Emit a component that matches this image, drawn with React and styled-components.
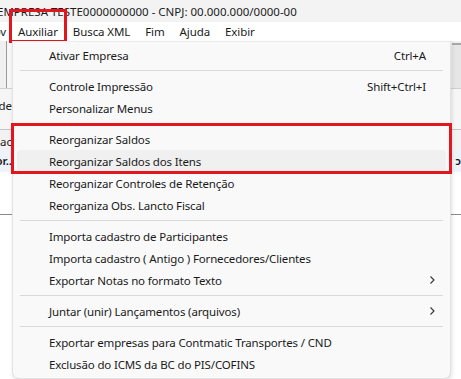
import React from "react";
import styled, { createGlobalStyle } from "styled-components";

const Global = createGlobalStyle`
  html, body { margin: 0; padding: 0; background: #ffffff; }
  body { font-family: "Segoe UI", "Noto Sans", "Open Sans", sans-serif; font-size: 11.5px; color: #1b1b1b; }
  #root { width: 461px; height: 379px; overflow: hidden; position: relative; }
`;

const Window = styled.div`
  width: 461px;
  height: 379px;
  position: relative;
  overflow: hidden;
  display: flex;
  flex-direction: column;
  background: #ffffff;
`;

const TitleBar = styled.div`
  height: 22px;
  flex: none;
  background: #f3f3f3;
  display: flex;
  align-items: center;
  white-space: nowrap;
  overflow: hidden;
`;

const TitleText = styled.span`
  margin-left: -3px;
  color: #1c1c1c;
`;

const MenuBar = styled.div`
  height: 19px;
  flex: none;
  background: #ffffff;
  display: flex;
  align-items: center;
  white-space: nowrap;
  letter-spacing: -0.1px;
`;

const MenuBarItem = styled.span`
  position: relative;
  height: 19px;
  display: flex;
  align-items: center;
  padding: 0 7.5px;
  color: #1b1b1b;
  ${(p) =>
    p.$marked &&
    `
    &::after {
      content: "";
      position: absolute;
      left: -1.5px;
      right: -1.5px;
      top: -13px;
      bottom: -2px;
      border: 3px solid #e3161e;
      box-sizing: border-box;
      pointer-events: none;
    }
  `}
`;

const Clipped = styled.div`
  width: ${(p) => p.$w}px;
  overflow: hidden;
  display: flex;
  justify-content: flex-end;
  white-space: nowrap;
  flex: none;
  & > span {
    padding-right: ${(p) => p.$pr ?? 0}px;
  }
`;

const Toolbar = styled.div`
  height: 47px;
  flex: none;
  background: #f0f0f0;
  display: flex;
  padding-left: 6px;
  box-sizing: border-box;
  justify-content: space-between;
`;

const ToolbarPanel = styled.div`
  width: 6px;
  border-left: 1px solid #9a9a9a;
  background: #f7f7f7;
`;

const ToolbarRight = styled.div`
  width: 9px;
  margin-top: 2px;
  border-top: 2px solid #a8a8a8;
  background: #e6e6e6;
`;

const FormRow = styled.div`
  height: 41px;
  flex: none;
  background: #f6f6f6;
  border-top: 1px solid #d0d0d0;
  box-sizing: border-box;
  display: flex;
  align-items: center;
  padding-bottom: 8px;
`;

const GridHeader = styled.div`
  height: 20px;
  flex: none;
  background: #f2f2f2;
  border-top: 1px solid #c4c4c4;
  box-sizing: border-box;
  display: flex;
  align-items: center;
  padding-top: 4px;
`;

const GridRow = styled.div`
  height: 23px;
  flex: none;
  background: #eef2fa;
  display: flex;
  align-items: center;
  font-weight: 600;
  justify-content: space-between;
`;

const Blank = styled.div`
  height: 42px;
  flex: none;
  background: #ffffff;
  border-bottom: 1px solid #8a8a8a;
`;

const Rest = styled.div`
  flex: 1;
  background: #ffffff;
`;

const Popup = styled.div`
  position: absolute;
  left: 12px;
  top: 41px;
  width: 439px;
  box-sizing: border-box;
  padding: 2px 0 3px;
  background: #f9f9f9;
  border: 1px solid #e2e2e2;
  border-top-color: #ececec;
  border-radius: 0 0 7px 7px;
  box-shadow: 1px 2px 4px rgba(0, 0, 0, 0.12);
  display: flex;
  flex-direction: column;
  letter-spacing: -0.15px;
`;

const Item = styled.div`
  height: 22px;
  margin: 0 4px;
  padding: 0 20px 0 32px;
  display: flex;
  align-items: center;
  justify-content: space-between;
  border-radius: 4px;
  white-space: nowrap;
  color: #1a1a1a;
  background: ${(p) => (p.$hover ? "#f0f0f0" : "transparent")};
`;

const Shortcut = styled.span`
  color: #1a1a1a;
`;

const Chevron = styled.svg`
  width: 8px;
  height: 10px;
  margin-right: -10px;
`;

const Separator = styled.div`
  height: 1px;
  margin: 4px 7px;
  background: #dadada;
`;

const Group = styled.div`
  position: relative;
  display: flex;
  flex-direction: column;
  &::after {
    content: "";
    position: absolute;
    left: -2px;
    right: -2px;
    top: -5px;
    bottom: -2px;
    border: 3px solid #e3161e;
    box-sizing: border-box;
    pointer-events: none;
  }
`;

const Arrow = () => (
  <Chevron viewBox="0 0 8 10">
    <polyline points="2.5,1.5 6,5 2.5,8.5" fill="none" stroke="#333" strokeWidth="1.1" />
  </Chevron>
);

export default function App() {
  return (
    <>
      <Global />
      <Window>
        <TitleBar>
          <TitleText>EMPRESA TESTE0000000000 - CNPJ: 00.000.000/0000-00</TitleText>
        </TitleBar>
        <MenuBar>
          <Clipped $w={10.5} $pr={4.5}>
            <span>Mov</span>
          </Clipped>
          <MenuBarItem $marked>Auxiliar</MenuBarItem>
          <MenuBarItem>Busca XML</MenuBarItem>
          <MenuBarItem>Fim</MenuBarItem>
          <MenuBarItem>Ajuda</MenuBarItem>
          <MenuBarItem>Exibir</MenuBarItem>
        </MenuBar>
        <Toolbar>
          <ToolbarPanel />
          <ToolbarRight />
        </Toolbar>
        <FormRow>
          <Clipped $w={12}>
            <span>Cidade</span>
          </Clipped>
        </FormRow>
        <GridHeader>
          <Clipped $w={12}>
            <span>Situac</span>
          </Clipped>
        </GridHeader>
        <GridRow>
          <Clipped $w={12}>
            <span>Fornecedor..</span>
          </Clipped>
          <span>ↄ</span>
        </GridRow>
        <Blank />
        <Rest />

        <Popup>
          <Item>
            <span>Ativar Empresa</span>
            <Shortcut>Ctrl+A</Shortcut>
          </Item>
          <Separator />
          <Item>
            <span>Controle Impressão</span>
            <Shortcut>Shift+Ctrl+I</Shortcut>
          </Item>
          <Item>
            <span>Personalizar Menus</span>
          </Item>
          <Separator />
          <Group>
            <Item>
              <span>Reorganizar Saldos</span>
            </Item>
            <Item $hover>
              <span>Reorganizar Saldos dos Itens</span>
            </Item>
          </Group>
          <Item>
            <span>Reorganizar Controles de Retenção</span>
          </Item>
          <Item>
            <span>Reorganiza Obs. Lancto Fiscal</span>
          </Item>
          <Separator />
          <Item>
            <span>Importa cadastro de Participantes</span>
          </Item>
          <Item>
            <span>Importa cadastro ( Antigo ) Fornecedores/Clientes</span>
          </Item>
          <Item>
            <span>Exportar Notas no formato Texto</span>
            <Arrow />
          </Item>
          <Separator />
          <Item>
            <span>Juntar (unir) Lançamentos (arquivos)</span>
            <Arrow />
          </Item>
          <Separator />
          <Item>
            <span>Exportar empresas para Contmatic Transportes / CND</span>
          </Item>
          <Item>
            <span>Exclusão do ICMS da BC do PIS/COFINS</span>
          </Item>
        </Popup>
      </Window>
    </>
  );
}
